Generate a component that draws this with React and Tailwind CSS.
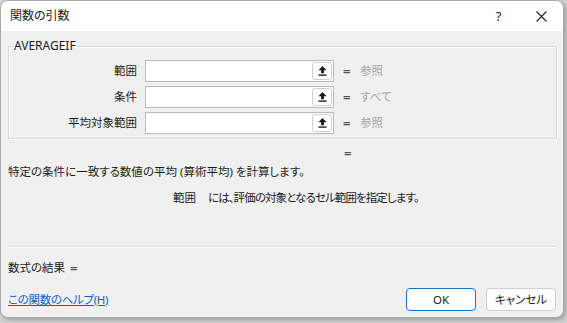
import { memo } from 'react';

const FONT = { fontFamily: '"Noto Sans", "Noto Sans CJK JP", sans-serif' };

function UploadIcon() {
    return (
        <svg className="w-[9px] h-[10px]" viewBox="0 0 10 11" fill="#1a1a1a">
            <polygon points="5,0 9.5,4.8 6.6,4.8 6.6,8 3.4,8 3.4,4.8 0.5,4.8" />
            <rect x="0.5" y="9.3" width="9" height="1.5" />
        </svg>
    );
}

function ArgRow({ label, value }) {
    return (
        <div className="flex items-center h-[22px]">
            <span className="w-[128px] text-right">{label}</span>
            <div className="ml-[8px] w-[189px] h-[22px] bg-white border border-[#b9b9b9] flex justify-end items-stretch p-[1px]">
                <div className="w-[20px] bg-white border border-[#cfcfcf] rounded-[3px] flex items-center justify-center">
                    <UploadIcon />
                </div>
            </div>
            <span className="ml-[9px] w-[9px] text-[#555] font-bold text-[13px] leading-none">=</span>
            <span className="ml-[8px] text-[#a6a6a6]">{value}</span>
        </div>
    );
}

function App() {
    return (
        <div className="w-[567px] h-[323px] bg-[#d2d2d2] overflow-hidden text-[11.5px] leading-[16px] text-[#1b1b1b] [font-feature-settings:'palt']" style={FONT}>
            <div className="w-[564px] h-[318px] rounded-lg border border-[#a9a9a9] bg-[#f0f0f0] overflow-hidden flex flex-col shadow-[2px_2px_4px_rgba(0,0,0,0.25)]">
                {/* title bar */}
                <div className="h-[30px] bg-white flex items-center shrink-0">
                    <span className="ml-[9px] flex-1 text-[12px]">関数の引数</span>
                    <div className="w-[43px] h-full flex items-center justify-center text-[13px]">?</div>
                    <div className="w-[43px] h-full flex items-center justify-center">
                        <svg className="w-[11px] h-[11px]" viewBox="0 0 11 11" stroke="#222" strokeWidth="1.1" fill="none">
                            <path d="M0.5 0.5L10.5 10.5M10.5 0.5L0.5 10.5" />
                        </svg>
                    </div>
                </div>

                {/* body */}
                <div className="flex-1 flex flex-col pl-[7px] pr-[6px]">
                    <fieldset className="mt-[7px] border border-[#d6d6d6] shadow-[1px_1px_0_#ffffff,inset_1px_1px_0_#ffffff] pb-[4px] pt-[6px] flex flex-col gap-[4px]">
                        <legend className="ml-[4px] px-[1px] text-[12px]">AVERAGEIF</legend>
                        <ArgRow label="範囲" value="参照" />
                        <ArgRow label="条件" value="すべて" />
                        <ArgRow label="平均対象範囲" value="参照" />
                    </fieldset>

                    <div className="mt-[6px] pl-[336px] text-[#555] font-bold text-[13px]">=</div>
                    <p className="mt-[3px]">特定の条件に一致する数値の平均 (算術平均) を計算します。</p>
                    <p className="mt-[10px] pl-[165px]">
                        <span>範囲</span>
                        <span className="ml-[12px] tracking-[-0.9px]">には、評価の対象となるセル範囲を指定します。</span>
                    </p>

                    <div className="mt-[40px] h-[1px] bg-[#dcdcdc] shadow-[0_1px_0_#ffffff] mr-[1px]" />

                    <div className="mt-[13px] flex items-center gap-[5px]">
                        <span>数式の結果</span>
                        <span className="text-[#555] font-bold text-[13px]">=</span>
                    </div>

                    <div className="mt-[12px] flex items-center justify-between">
                        <span className="text-[#0a63c9] underline tracking-[-0.3px]">この関数のヘルプ(H)</span>
                        <div className="flex gap-[10px] mr-[1px]">
                            <div className="w-[70px] h-[23px] bg-white border border-[#1a6fc4] rounded-[4px] flex items-center justify-center">OK</div>
                            <div className="w-[70px] h-[23px] bg-[#fdfdfd] border border-[#d0d0d0] rounded-[4px] flex items-center justify-center">キャンセル</div>
                        </div>
                    </div>
                </div>
            </div>
        </div>
    );
}

export default memo(App);
